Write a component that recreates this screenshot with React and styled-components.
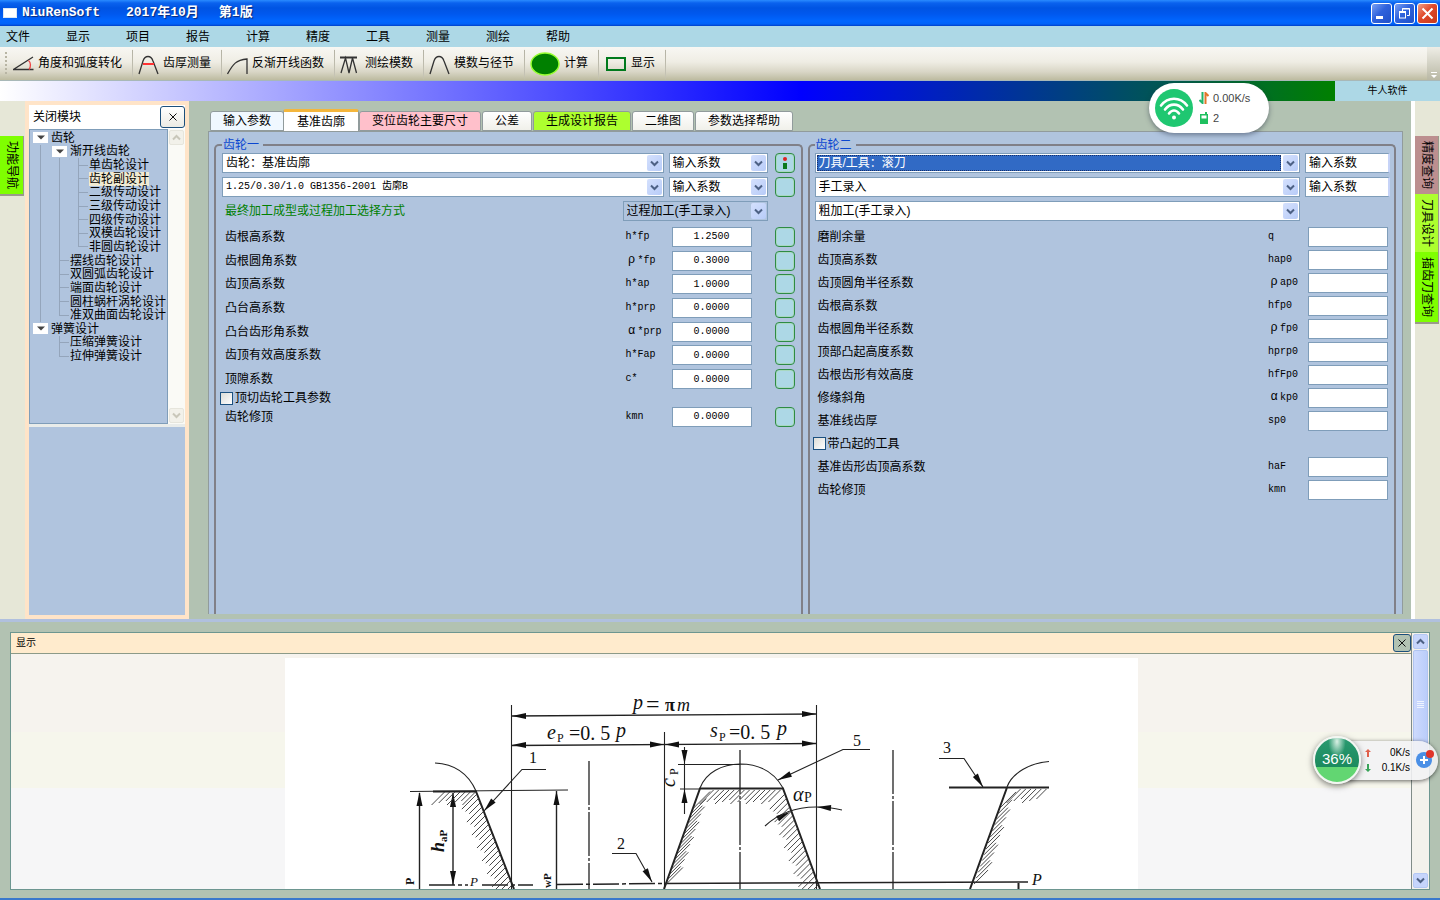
import React from 'react';
import styled, { createGlobalStyle, css } from 'styled-components';

const SANS = "'Liberation Sans', 'Noto Sans CJK SC', sans-serif";
const MONO = "'Liberation Mono', 'Noto Sans CJK SC', monospace";

const GlobalStyle = createGlobalStyle`
  *, *::before, *::after { box-sizing: border-box; }
  body { margin: 0; font: 12px/14px ${SANS}; color: #000; background: #b2c2b2; }
  button, input, select { font: inherit; color: inherit; margin: 0; padding: 0; }
  ul { list-style: none; margin: 0; padding: 0; }
`;

const Window = styled.div`
  position: relative;
  display: flex;
  flex-direction: column;
  min-height: 100vh;
  overflow: hidden;
  border-bottom: 2px solid #3a78cc;
`;

/* Title bar */
const TitleBar = styled.header`
  display: flex;
  align-items: center;
  height: 26px;
  padding: 0 2px 0 3px;
  background: linear-gradient(#2a8bff 0, #0a62ee 3px, #0054e3 8px, #0058ee 14px, #0066ff 21px, #0062f8 24px, #0040c8 26px);
`;
const AppIcon = styled.span`
  width: 14px;
  height: 10px;
  margin-right: 5px;
  background: #fff;
  border: 1px solid #dce8f4;
`;
const Title = styled.h1`
  display: flex;
  flex: 1;
  gap: 20px;
  margin: 0;
  font: bold 13px/16px ${MONO};
  color: #fff;
  text-shadow: 1px 1px 1px #0a2a7a;
  span:first-child { margin-right: 6px; }
`;
const WindowButtons = styled.div`
  display: flex;
  gap: 2px;
`;
const WindowButton = styled.button`
  width: 21px;
  height: 21px;
  border: 1px solid #fff;
  border-radius: 3px;
  background: ${p => (p.$danger
    ? 'linear-gradient(135deg, #f0a088, #e0492a 45%, #c8381a)'
    : 'linear-gradient(135deg, #7aa0f4, #2f62dc 45%, #2050c8)')};
  svg { display: block; }
`;

/* Menu and toolbar */
const MenuBar = styled.nav`
  display: flex;
  align-items: center;
  height: 21px;
  background: #add8e6;
`;
const MenuItem = styled.button`
  width: 60px;
  padding-left: 6px;
  border: 0;
  background: none;
  text-align: left;
`;
const ToolBar = styled.div`
  display: flex;
  height: 34px;
  padding-left: 4px;
  border-bottom: 1px solid #a8b8b8;
  background: linear-gradient(#f8f7f3, #efede4 45%, #d9d6c6 75%, #bdbba0);
`;
const Grip = styled.span`
  width: 4px;
  margin: 5px 0;
  background: repeating-linear-gradient(#b8b5a4 0 2px, transparent 2px 4px) 1px 0 / 2px 100% no-repeat;
`;
const ToolButton = styled.button`
  display: flex;
  align-items: center;
  padding: 0 10px 2px 5px;
  border: 0;
  border-right: 1px solid;
  border-image: linear-gradient(transparent 10%, #b4b2a4 12%, #c4c2b4 80%, transparent) 1;
  background: none;
  white-space: nowrap;
  svg { margin-right: 4px; flex: none; }
`;
const Overflow = styled.span`
  display: flex;
  align-items: flex-end;
  width: 13px;
  margin-left: auto;
  background: linear-gradient(#eeede6, #b9b8a4);
`;
const Banner = styled.div`
  display: flex;
  height: 20px;
`;
const BannerStrip = styled.div`
  flex: 1;
  background: linear-gradient(90deg, #fff, #00f 60%, #008000);
`;
const Brand = styled.div`
  width: 105px;
  background: #add8e6;
  font-size: 10px;
  line-height: 20px;
  text-align: center;
`;

/* Workspace */
const Workspace = styled.main`
  display: flex;
  flex: 1;
  min-height: 400px;
`;
const Rail = styled.aside`
  display: flex;
  flex-direction: column;
  width: 25px;
  padding-top: 35px;
  background: #e6e7d7;
`;
const RailTab = styled.button`
  width: 24px;
  padding: 5px 0;
  border: 0;
  border-right: 1px solid #9a9a8a;
  border-bottom: ${p => (p.$last ? '2px solid #9a9a8a' : '0')};
  background: ${p => p.$color};
  writing-mode: vertical-rl;
  text-orientation: sideways;
  line-height: 22px;
  text-align: left;
`;
const Splitter = styled.div`
  width: 4px;
  background: #fff;
`;
const SidePanel = styled.section`
  display: flex;
  flex-direction: column;
  width: 164px;
  border: 4px solid #ffe4c8;
  background: #e9ecea;
`;
const SideHeader = styled.div`
  display: flex;
  align-items: center;
  height: 24px;
  padding-left: 4px;
  background: #fff;
  span { flex: 1; }
`;
const CloseButton = styled.button`
  display: grid;
  place-items: center;
  width: ${p => (p.$small ? 18 : 25)}px;
  height: ${p => (p.$small ? 18 : 22)}px;
  border: 1px solid #1c4f7c;
  border-radius: 3px;
  background: ${p => (p.$small ? '#b2c2b2' : 'linear-gradient(#fff, #ecebe4)')};
`;
const TreeFrame = styled.div`
  display: flex;
  height: 295px;
`;
const Tree = styled.ul`
  display: flex;
  flex: 1;
  flex-direction: column;
  padding: 1px 0 60px 2px;
  border: 1px solid #7f9db9;
  background: #b0c4de;
`;
const TreeRow = styled.li`
  display: flex;
  flex: 1;
  min-height: 0;
  align-items: center;
  white-space: nowrap;
  line-height: 14px;
`;
const lineColor = '#94a5bb';
const Guide = styled.span`
  position: relative;
  align-self: stretch;
  width: 19px;
  ${p => p.$kind !== 'blank' && css`
    background:
      linear-gradient(${lineColor}, ${lineColor}) 8px 0 / 1px ${p.$kind === 'end' ? '50%' : '100%'} no-repeat,
      linear-gradient(${lineColor}, ${lineColor}) 8px 50% / ${p.$kind === 'line' ? '0' : '10px'} 1px no-repeat;
  `}
`;
const Expander = styled.button`
  display: grid;
  place-items: center;
  width: 15px;
  height: 11px;
  margin: 0 3px 0 1px;
  border: 0;
  background: #fff;
`;
const TreeLabel = styled.span`
  background: ${p => (p.$active ? '#f0ead2' : 'transparent')};
`;
const ScrollTrack = styled.div`
  display: flex;
  flex-direction: column;
  justify-content: space-between;
  align-items: center;
  width: 17px;
  padding: 1px 0;
  background: ${p => (p.$blue ? '#f3f2ec' : '#fafaf6')};
`;
const ScrollButton = styled.button`
  display: grid;
  place-items: center;
  width: 15px;
  height: 15px;
  border: 1px solid ${p => (p.$blue ? '#b4c8f4' : '#e6e5dc')};
  border-radius: 2px;
  background: ${p => (p.$blue ? '#c6d5fc' : '#f2f1ea')};
`;
const Thumb = styled.div`
  display: grid;
  place-items: center;
  width: 15px;
  height: 110px;
  margin: 1px 0 auto;
  border: 1px solid #b0c4f0;
  border-radius: 2px;
  background: linear-gradient(90deg, #cddafd, #bacdfa);
`;
const SideBlank = styled.div`
  flex: 1;
  margin-top: 3px;
  background: #b0c4de;
`;

/* Tabs and editor */
const Editor = styled.section`
  display: flex;
  flex: 1;
  flex-direction: column;
  min-width: 0;
  padding: 8px 8px 5px 19px;
`;
const TabList = styled.div`
  display: flex;
  align-items: flex-end;
  gap: 1px;
  height: 22px;
  padding-left: 2px;
`;
const Tab = styled.button`
  height: ${p => (p.$active ? 22 : 20)}px;
  width: ${p => p.$chars * 12 + (p.$active ? 28 : 26)}px;
  margin: 0 ${p => (p.$active ? '-1px 0 -2px' : '0')};
  border: 1px solid #919b9c;
  border-top: ${p => (p.$active ? '3px solid #f4b63c' : '1px solid #919b9c')};
  border-bottom-width: ${p => (p.$active ? 0 : 1)}px;
  border-radius: 3px 3px 0 0;
  background: ${p => p.$color || 'linear-gradient(#fff, #f0f0ea)'};
  white-space: nowrap;
`;
const TabPanel = styled.div`
  display: grid;
  grid-template-columns: minmax(0, 1fr) minmax(0, 1fr);
  flex: 1;
  gap: 5px;
  padding: 5px 6px 0 5px;
  border: 1px solid #919b9c;
  border-bottom: 0;
  background: #b0c4de;
`;
const Group = styled.fieldset`
  min-width: 0;
  margin: 0;
  padding: 0 ${p => (p.$clipped ? '4px 0 5px' : '6px')};
  border: 2px solid #808088;
  border-bottom: 0;
  border-radius: 5px 5px 0 0;
  legend { padding: 0 4px 0 1px; line-height: 16px; color: #0a46d0; }
`;
const SelectRow = styled.div`
  display: flex;
  align-items: center;
  gap: 5px;
  margin-bottom: 4px;
  & > button { margin-left: 2px; }
`;
const Hint = styled.span`
  flex: 1;
  padding-left: 3px;
  color: #008000;
`;
const SelectBox = styled.span`
  display: flex;
  flex: ${p => (p.$width ? 'none' : '1')};
  width: ${p => (p.$width ? `${p.$width}px` : 'auto')};
  min-width: 0;
  height: 20px;
  margin-right: ${p => p.$end || 0}px;
  padding: 1px;
  border: 1px solid #7f9db9;
  background: ${p => (p.$muted ? 'transparent' : '#fff')};
  ${p => p.$cut && css`border-right: 2px solid #c6d3f7;`}
`;
const Select = styled.select`
  flex: 1;
  min-width: 0;
  padding-left: ${p => (p.$selected ? 1 : 2)}px;
  margin-right: 2px;
  border: ${p => (p.$selected ? '1px dotted #16306a' : '0')};
  outline: 0;
  appearance: none;
  background: ${p => (p.$selected ? '#316ac5' : 'transparent')};
  color: ${p => (p.$selected ? '#fff' : '#000')};
  ${p => p.$mono && css`font: 10px/14px ${MONO};`}
`;
const Arrow = styled.span`
  display: grid;
  place-items: center;
  width: 15px;
  border-radius: 2px;
  background: linear-gradient(135deg, #d4e0fd, #b8ccf8);
`;
const Rows = styled.div`
  display: grid;
  grid-auto-rows: 1fr;
  ${p => p.$height && css`height: ${p.$height}px;`}
`;
const FieldRow = styled.div`
  display: flex;
  align-items: center;
  min-height: 23px;
`;
const FieldLabel = styled.label`
  flex: 1;
  padding-left: 3px;
`;
const Symbol = styled.span`
  width: ${p => p.$width}px;
  font: 10px/14px ${MONO};
  white-space: nowrap;
`;
const Greek = styled.span`
  display: inline-block;
  width: 12px;
  font-size: 12px;
  text-align: center;
`;
const NumberInput = styled.input`
  width: 80px;
  height: 20px;
  margin-right: ${p => p.$gap}px;
  border: 1px solid #7f9db9;
  background: #fff;
  font: 10px/14px ${MONO};
  text-align: center;
`;
const InfoButton = styled.button`
  display: grid;
  place-items: center;
  flex: none;
  width: 20px;
  height: 20px;
  border: 1px solid #2e8b45;
  border-radius: 4px;
  background: #add8e6;
  box-shadow: inset 0 0 0 1px #a8d8c0;
`;
const CheckLabel = styled.label`
  display: flex;
  align-items: center;
  gap: 2px;
  height: ${p => p.$height}px;
  margin-left: -2px;
`;
const CheckBox = styled.input`
  appearance: none;
  width: 13px;
  height: 13px;
  border: 1px solid #1c5180;
  background: linear-gradient(135deg, #dcdcd7, #fff);
`;

/* Drawing dock */
const Dock = styled.section`
  height: 279px;
  padding: 10px 10px 8px;
  border-top: 3px solid #b0c0de;
  background: #b2c2b2;
`;
const DockFrame = styled.div`
  display: flex;
  height: 258px;
  border: 1px solid #6d9690;
`;
const DockMain = styled.div`
  display: flex;
  flex: 1;
  flex-direction: column;
  min-width: 0;
  border-right: 1px solid #808c88;
`;
const DockHeader = styled.div`
  display: flex;
  align-items: center;
  justify-content: space-between;
  height: 21px;
  padding-left: 5px;
  border-bottom: 1px solid #8c9a88;
  background: #ffebcd;
  font-size: 10px;
`;
const Canvas = styled.div`
  display: flex;
  flex: 1;
  justify-content: center;
  min-height: 0;
  padding-top: 4px;
  overflow: hidden;
  background: linear-gradient(#f6f3ee 78px, #f6f6ec 78px 134px, #f6f6f7 134px);
`;
const Drawing = styled.svg`
  width: 853px;
  height: 231px;
  background: #fff;
  font-family: 'Liberation Serif', serif;
`;

/* Floating monitors */
const WifiWidget = styled.div`
  position: absolute;
  top: 83px;
  right: 171px;
  display: flex;
  align-items: center;
  gap: 6px;
  width: 120px;
  height: 50px;
  padding-left: 6px;
  border-radius: 25px;
  background: #fff;
  box-shadow: 0 2px 5px rgba(40, 50, 70, 0.5);
  color: #444;
`;
const WifiLines = styled.div`
  display: grid;
  gap: 6px;
  font-size: 11px;
  div { display: flex; align-items: center; gap: 4px; }
`;
const SpeedWidget = styled.div`
  position: absolute;
  top: 735px;
  right: 2px;
  display: flex;
  align-items: center;
  width: 125px;
  height: 50px;
`;
const SpeedBall = styled.div`
  position: relative;
  z-index: 1;
  flex: none;
  width: 48px;
  height: 48px;
  border: 2px solid #f2f6f2;
  border-radius: 50%;
  background: radial-gradient(ellipse at 50% 8%, #d8f0e4 0, transparent 28%), linear-gradient(#2a9a70, #1c8a5e 65%, #62d672 65%);
  box-shadow: 0 2px 6px rgba(0, 0, 0, 0.5);
  color: #fff;
  font-size: 15px;
  line-height: 42px;
  text-align: center;
`;
const SpeedPill = styled.div`
  display: flex;
  flex: 1;
  align-items: center;
  height: 39px;
  margin-left: -24px;
  padding: 0 4px 0 28px;
  border-radius: 0 20px 20px 0;
  background: rgba(243, 243, 245, 0.88);
  box-shadow: 0 1px 4px rgba(0, 0, 0, 0.6);
  font-size: 10px;
`;
const SpeedValues = styled.div`
  flex: 1;
  div { display: flex; align-items: center; justify-content: space-between; height: 15px; }
`;
const AddButton = styled.button`
  width: 20px;
  height: 20px;
  margin-left: 4px;
  border: 0;
  background: none;
  svg { display: block; overflow: visible; }
`;

const Chevron = ({ up, color = '#4d6185' }) => (
  <svg width="9" height="7" viewBox="0 0 9 7" fill="none" stroke={color} strokeWidth="2">
    <path d={up ? 'M1 5.5 4.5 2 8 5.5' : 'M1 1.5 4.5 5 8 1.5'} />
  </svg>
);
const Cross = ({ size = 8 }) => (
  <svg width={size} height={size} viewBox="0 0 8 8" stroke="#111" strokeWidth="1"><path d="M0.5 0.5 7.5 7.5M7.5 0.5 0.5 7.5" /></svg>
);

const toolIcon = (children, width = 21) => (
  <svg width={width} height="26" viewBox={`0 0 ${width} 26`} fill="none" stroke="#333" strokeWidth="1.3">{children}</svg>
);
const TOOLS = [
  ['角度和弧度转化', toolIcon(<><path d="M20 7 0.5 19.5H20.5" /><path d="M15.5 10.5C18 12.5 18 17 16 19.5" stroke="#e44" /></>)],
  ['齿厚测量', toolIcon(<><path d="M1 24 5 11C7 5 13 5 15 11L20 24" /><path d="M5 14H16" stroke="#f33" strokeWidth="2" /></>)],
  ['反渐开线函数', toolIcon(<path d="M0.5 24C6 14 9 10 20 9V24" />)],
  ['测绘模数', toolIcon(<><path d="M0 7.5H17" strokeWidth="2" /><path d="M1 23 5.5 8 9 23 12.5 8 16.5 23" /></>)],
  ['模数与径节', toolIcon(<path d="M1 24 5 11C7 5 13 5 15 11L20 24" />)],
  ['计算', toolIcon(<ellipse cx="15" cy="14" rx="14" ry="11" fill="#008000" stroke="#9f3" strokeWidth="1.5" />, 30)],
  ['显示', toolIcon(<rect x="3" y="8" width="18" height="12" stroke="#007a1c" strokeWidth="2" />, 23)],
];

const TREE = [
  ['齿轮', 'X'],
  ['渐开线齿轮', 'line X'],
  ['单齿轮设计', 'line line tee'],
  ['齿轮副设计', 'line line tee', true],
  ['二级传动设计', 'line line tee'],
  ['三级传动设计', 'line line tee'],
  ['四级传动设计', 'line line tee'],
  ['双模齿轮设计', 'line line tee'],
  ['非圆齿轮设计', 'line line end'],
  ['摆线齿轮设计', 'line tee'],
  ['双圆弧齿轮设计', 'line tee'],
  ['端面齿轮设计', 'line tee'],
  ['圆柱蜗杆涡轮设计', 'line tee'],
  ['准双曲面齿轮设计', 'line end'],
  ['弹簧设计', 'X'],
  ['压缩弹簧设计', 'blank tee'],
  ['拉伸弹簧设计', 'blank end'],
];

const TABS = [
  ['输入参数', '#f0f8ff'],
  ['基准齿廓', '#fff'],
  ['变位齿轮主要尺寸', '#ffc0cb'],
  ['公差', ''],
  ['生成设计报告', '#adff2f'],
  ['二维图', ''],
  ['参数选择帮助', ''],
];

const GEAR_ONE = [
  ['齿根高系数', 'h*fp', '1.2500'],
  ['齿根圆角系数', 'ρ*fp', '0.3000'],
  ['齿顶高系数', 'h*ap', '1.0000'],
  ['凸台高系数', 'h*prp', '0.0000'],
  ['凸台齿形角系数', 'α*prp', '0.0000'],
  ['齿顶有效高度系数', 'h*Fap', '0.0000'],
  ['顶隙系数', 'c*', '0.0000'],
];
const GEAR_TWO = [
  ['磨削余量', 'q'],
  ['齿顶高系数', 'hap0'],
  ['齿顶圆角半径系数', 'ρap0'],
  ['齿根高系数', 'hfp0'],
  ['齿根圆角半径系数', 'ρfp0'],
  ['顶部凸起高度系数', 'hprp0'],
  ['齿根齿形有效高度', 'hfFp0'],
  ['修缘斜角', 'αkp0'],
  ['基准线齿厚', 'sp0'],
];
const GEAR_TWO_TIP = [
  ['基准齿形齿顶高系数', 'haF'],
  ['齿轮修顶', 'kmn'],
];

function Combo({ value, label, width, end, muted, cut, selected, mono }) {
  return (
    <SelectBox $width={width} $end={end} $muted={muted} $cut={cut}>
      <Select aria-label={label} defaultValue={value} $selected={selected} $mono={mono}>
        <option>{value}</option>
      </Select>
      {!cut && <Arrow><Chevron /></Arrow>}
    </SelectBox>
  );
}

function Field({ group, row: [label, symbol, value = ''], info }) {
  const id = `${group}-${symbol}`;
  const greek = /^[ρα]/.test(symbol);
  return (
    <FieldRow>
      <FieldLabel htmlFor={id}>{label}</FieldLabel>
      <Symbol $width={info ? 46 : 40}>
        {greek && <Greek>{symbol[0]}</Greek>}
        {greek ? symbol.slice(1) : symbol}
      </Symbol>
      <NumberInput id={id} defaultValue={value} $gap={info ? 23 : 2} />
      {info && <InfoButton aria-label={`${label}说明`} />}
    </FieldRow>
  );
}

const Check = ({ children, height }) => (
  <CheckLabel $height={height}><CheckBox type="checkbox" />{children}</CheckLabel>
);

/* Arrowhead with its tip at x,y; angle 0 points right. */
const Head = ({ x, y, a = 0 }) => (
  <path d="M0 0-14-3V3Z" transform={`translate(${x} ${y}) rotate(${a})`} fill="#111" stroke="none" />
);

/* Short 45° strokes along a tooth edge, drawn towards dir. */
function Hatch({ from, to, count, length, dir }) {
  return Array.from({ length: count }, (_, i) => {
    const t = (i + 0.5) / count;
    const x = from[0] + (to[0] - from[0]) * t;
    const y = from[1] + (to[1] - from[1]) * t;
    const l = length - (i % 3) * 2;
    return <path key={i} d={`M${x} ${y}l${l * dir} ${-l * dir}`} strokeWidth="0.9" stroke="#333" />;
  });
}

function ToothDrawing() {
  return (
    <Drawing viewBox="285 658 853 231" role="img" aria-label="基准齿廓" fill="none" stroke="#222" strokeWidth="1.1">
      <path d="M511.5 705V889M664.5 732V889M816.5 705V889" />
      <path d="M512 716 816 714M512 745.5 816 743.5" strokeWidth="1.3" />
      <Head x={512} y={716} a={180} /><Head x={816} y={714} />
      <Head x={512} y={745} a={180} /><Head x={664} y={744.5} />
      <Head x={665} y={744.5} a={180} /><Head x={816} y={743.5} />
      <path d="M410 791.5 568 790" />
      <path d="M433 791.5H476L514 889M664 889 700 788.5H783L820 889M949 787.5H1049M1007 787.5 970 889" strokeWidth="2" />
      <path d="M435 763C455 764 468 773 476 791M700 788C706 772 722 764.5 740 764C760 764 774 772 783 788M1007 787C1012 773 1030 763 1049 761.5" />
      <path d="M419.5 793V889M453 793V885M556.5 791V889" strokeWidth="1.4" />
      <Head x={419.5} y={792} a={-90} /><Head x={453} y={793} a={-90} /><Head x={453} y={885} a={90} /><Head x={556.5} y={791} a={-90} />
      <path d="M429 885H468M482 885H533M557 884.5 664 883.5" strokeWidth="1.5" strokeDasharray="26 3 4 3" />
      <path d="M664 883.5 1028 882" strokeWidth="1.5" />
      <path d="M589 761V889M893 750V889M740 750V889" strokeDasharray="44 2 3 2" strokeWidth="1.3" />
      <path d="M684.5 747V814M678 764.5H740M680 789H700" />
      <Head x={684.5} y={764} a={90} /><Head x={684.5} y={789} a={-90} />
      <path d="M546 769.5H522L484 811M612 853.5H636L652 882M870 749.5H843L778 780M939 758.5H964L983 787" />
      <Head x={484} y={811} a={132} /><Head x={652} y={882} a={61} /><Head x={778} y={780} a={155} /><Head x={983} y={787} a={57} />
      <path d="M765 826C781 811 801 807 816 807C826 807 834 808 842 810" />
      <Head x={790} y={812} a={-28} /><Head x={817} y={807} a={184} />
      <path d="M1018.5 883V889" strokeWidth="2" />

      <Hatch from={[442, 792]} to={[478, 792]} count={7} length={13} dir={-1} />
      <Hatch from={[476, 792]} to={[513, 887]} count={22} length={15} dir={-1} />
      <Hatch from={[711, 790]} to={[783, 790]} count={14} length={14} dir={-1} />
      <Hatch from={[694, 806]} to={[665, 887]} count={16} length={17} dir={1} />
      <Hatch from={[784, 792]} to={[819, 887]} count={22} length={15} dir={-1} />
      <Hatch from={[1018, 789]} to={[1049, 789]} count={6} length={14} dir={-1} />
      <Hatch from={[1001, 805]} to={[973, 887]} count={14} length={16} dir={1} />

      <g fill="#111" stroke="none" fontSize="18">
        <text x="633" y="709" fontSize="20" fontStyle="italic">p</text>
        <text x="646" y="712" fontSize="24">=</text>
        <text x="665" y="711" fontWeight="bold">π</text>
        <text x="677" y="711" fontStyle="italic">m</text>
        <text x="547" y="739" fontSize="20" fontStyle="italic">e</text>
        <text x="557" y="742" fontSize="12">P</text>
        <text x="569" y="740" fontSize="20">=0. 5</text>
        <text x="616" y="737" fontSize="20" fontStyle="italic">p</text>
        <text x="710" y="737" fontSize="20" fontStyle="italic">s</text>
        <text x="719" y="741" fontSize="12">P</text>
        <text x="729" y="739" fontSize="20">=0. 5</text>
        <text x="777" y="735" fontSize="20" fontStyle="italic">p</text>
        <text x="529" y="763" fontSize="16">1</text>
        <text x="617" y="849" fontSize="16">2</text>
        <text x="943" y="753" fontSize="16">3</text>
        <text x="853" y="746" fontSize="16">5</text>
        <text x="793" y="801" fontSize="20" fontStyle="italic">α</text>
        <text x="804" y="802" fontSize="14">P</text>
        <text x="470" y="886" fontSize="13" fontStyle="italic">P</text>
        <text x="1032" y="885" fontSize="16" fontStyle="italic">P</text>
        <text transform="translate(444 852) rotate(-90)" fontStyle="italic" fontWeight="bold">h<tspan dy="3" fontSize="11" fontStyle="normal">aP</tspan></text>
        <text transform="translate(675 787) rotate(-90)" fontSize="20" fontStyle="italic">c<tspan dx="3" dy="3" fontSize="12" fontStyle="normal">P</tspan></text>
        <text transform="translate(414 885) rotate(-90)" fontSize="12" fontWeight="bold">P</text>
        <text transform="translate(551 888) rotate(-90)" fontSize="11" fontWeight="bold">wP</text>
      </g>
    </Drawing>
  );
}

export default function App() {
  return (
    <Window>
      <GlobalStyle />
      <TitleBar>
        <AppIcon />
        <Title><span>NiuRenSoft</span><span>2017年10月</span><span>第1版</span></Title>
        <WindowButtons>
          <WindowButton aria-label="最小化">
            <svg width="19" height="19" viewBox="0 0 19 19"><rect x="4" y="12" width="7" height="3" fill="#fff" /></svg>
          </WindowButton>
          <WindowButton aria-label="还原">
            <svg width="19" height="19" viewBox="0 0 19 19" fill="none" stroke="#fff"><path d="M7.5 7V4.5H14.5V11.5H12M7 5H15" /><rect x="4.5" y="8" width="6" height="6" /><path d="M4 8H11" strokeWidth="2" /></svg>
          </WindowButton>
          <WindowButton $danger aria-label="关闭">
            <svg width="19" height="19" viewBox="0 0 19 19" stroke="#fff" strokeWidth="2"><path d="M4.5 4.5 14.5 14.5M14.5 4.5 4.5 14.5" /></svg>
          </WindowButton>
        </WindowButtons>
      </TitleBar>

      <MenuBar>
        {['文件', '显示', '项目', '报告', '计算', '精度', '工具', '测量', '测绘', '帮助'].map(m => <MenuItem key={m}>{m}</MenuItem>)}
      </MenuBar>

      <ToolBar>
        <Grip />
        {TOOLS.map(([name, icon]) => <ToolButton key={name}>{icon}{name}</ToolButton>)}
        <Overflow>
          <svg width="12" height="9" viewBox="0 0 12 9" fill="#fff"><path d="M4 1H10V2H4ZM4 4H10L7 7Z" /></svg>
        </Overflow>
      </ToolBar>

      <Banner><BannerStrip /><Brand>牛人软件</Brand></Banner>

      <Workspace>
        <Rail><RailTab $color="#7fff00" $last>功能导航</RailTab></Rail>
        <SidePanel>
          <SideHeader>
            <span>关闭模块</span>
            <CloseButton aria-label="关闭模块"><Cross /></CloseButton>
          </SideHeader>
          <TreeFrame>
            <Tree>
              {TREE.map(([name, guides, active]) => (
                <TreeRow key={name}>
                  {guides.split(' ').map((g, i) => (g === 'X'
                    ? <Expander key={i} aria-label={name}><svg width="8" height="5" viewBox="0 0 8 5" fill="#444"><path d="M0 0.5H8L4 4.5Z" /></svg></Expander>
                    : <Guide key={i} $kind={g} />))}
                  <TreeLabel $active={active}>{name}</TreeLabel>
                </TreeRow>
              ))}
            </Tree>
            <ScrollTrack>
              <ScrollButton aria-label="向上"><Chevron up color="#c9c7ba" /></ScrollButton>
              <ScrollButton aria-label="向下"><Chevron color="#c9c7ba" /></ScrollButton>
            </ScrollTrack>
          </TreeFrame>
          <SideBlank />
        </SidePanel>

        <Editor>
          <TabList>
            {TABS.map(([name, color], i) => (
              <Tab key={name} $chars={name.length} $color={color} $active={i === 1}>{name}</Tab>
            ))}
          </TabList>
          <TabPanel>
            <Group>
              <legend>齿轮一</legend>
              <SelectRow>
                <Combo label="齿廓类型" value="齿轮：基准齿廓" />
                <Combo label="类型输入方式" value="输入系数" width={99} />
                <InfoButton aria-label="说明">
                  <svg width="8" height="14" viewBox="0 0 8 14"><circle cx="4" cy="3" r="2" fill="#d22" /><rect x="2" y="7" width="4" height="6" fill="#0a7a1c" /></svg>
                </InfoButton>
              </SelectRow>
              <SelectRow>
                <Combo label="齿廓标准" value="1.25/0.30/1.0 GB1356-2001 齿廓B" mono />
                <Combo label="标准输入方式" value="输入系数" width={99} />
                <InfoButton aria-label="标准说明" />
              </SelectRow>
              <SelectRow>
                <Hint>最终加工成型或过程加工选择方式</Hint>
                <Combo label="加工方式" value="过程加工(手工录入)" width={145} end={27} muted />
              </SelectRow>
              <Rows $height={166}>
                {GEAR_ONE.map(r => <Field key={r[1]} group="one" row={r} info />)}
              </Rows>
              <Check height={14}>顶切齿轮工具参数</Check>
              <Field group="one" row={['齿轮修顶', 'kmn', '0.0000']} info />
            </Group>

            <Group $clipped>
              <legend>齿轮二</legend>
              <SelectRow>
                <Combo label="刀具类型" value="刀具/工具：滚刀" selected />
                <Combo label="刀具输入方式" value="输入系数" width={85} cut />
              </SelectRow>
              <SelectRow>
                <Combo label="录入方式" value="手工录入" />
                <Combo label="录入系数" value="输入系数" width={85} cut />
              </SelectRow>
              <SelectRow>
                <Combo label="粗加工" value="粗加工(手工录入)" end={90} />
              </SelectRow>
              <Rows>
                {GEAR_TWO.map(r => <Field key={r[1]} group="two" row={r} />)}
                <Check height={23}>带凸起的工具</Check>
                {GEAR_TWO_TIP.map(r => <Field key={r[1]} group="two" row={r} />)}
              </Rows>
            </Group>
          </TabPanel>
        </Editor>

        <Splitter />
        <Rail>
          <RailTab $color="#bc8f8f">精度查询</RailTab>
          <RailTab $color="#adff2f">刀具设计</RailTab>
          <RailTab $color="#7fff00" $last>插齿刀查询</RailTab>
        </Rail>
      </Workspace>

      <Dock>
        <DockFrame>
          <DockMain>
            <DockHeader>
              <span>显示</span>
              <CloseButton $small aria-label="关闭显示"><Cross /></CloseButton>
            </DockHeader>
            <Canvas><ToothDrawing /></Canvas>
          </DockMain>
          <ScrollTrack $blue>
            <ScrollButton $blue aria-label="向上滚动"><Chevron up /></ScrollButton>
            <Thumb><svg width="7" height="8" viewBox="0 0 7 8" stroke="#eef4fe"><path d="M0 .5H7M0 2.5H7M0 4.5H7M0 6.5H7" /></svg></Thumb>
            <ScrollButton $blue aria-label="向下滚动"><Chevron /></ScrollButton>
          </ScrollTrack>
        </DockFrame>
      </Dock>

      <WifiWidget>
        <svg width="38" height="38" viewBox="0 0 38 38" fill="none" stroke="#fff" strokeWidth="2.6" strokeLinecap="round">
          <circle cx="19" cy="19" r="19" fill="#1fc771" stroke="none" />
          <path d="M6 16.5C13 7.5 25 7.5 32 16.5M10 20.5C15 14 23 14 28 20.5M14 24.5C17 20.5 21 20.5 24 24.5" />
          <circle cx="19" cy="28.5" r="2" fill="#fff" stroke="none" />
        </svg>
        <WifiLines>
          <div>
            <svg width="10" height="12" viewBox="0 0 10 12" fill="none" strokeWidth="2"><path d="M3.5 0V11L0.5 8" stroke="#1fb46a" /><path d="M6.5 12V1L9.5 4" stroke="#e2762a" /></svg>
            0.00K/s
          </div>
          <div>
            <svg width="10" height="12" viewBox="0 0 10 12" fill="#1fc05f"><path d="M1 2H6V0H8V2H9V12H1Z" /><rect x="2.5" y="3.5" width="5" height="3" fill="#fff" /></svg>
            2
          </div>
        </WifiLines>
      </WifiWidget>

      <SpeedWidget>
        <SpeedBall>36%</SpeedBall>
        <SpeedPill>
          <SpeedValues>
            <div><svg width="6" height="8" viewBox="0 0 6 8" fill="#e0604c"><path d="M3 0 6 3H4V8H2V3H0Z" /></svg>0K/s</div>
            <div><svg width="6" height="8" viewBox="0 0 6 8" fill="#3aa45a"><path d="M3 8 6 5H4V0H2V5H0Z" /></svg>0.1K/s</div>
          </SpeedValues>
          <AddButton aria-label="加速">
            <svg width="20" height="20" viewBox="0 0 20 20"><circle cx="10" cy="10" r="8" fill="#4a8fe6" /><path d="M10 6V14M6 10H14" stroke="#fff" strokeWidth="2" /><circle cx="16" cy="4" r="4" fill="#e0352b" /></svg>
          </AddButton>
        </SpeedPill>
      </SpeedWidget>
    </Window>
  );
}
